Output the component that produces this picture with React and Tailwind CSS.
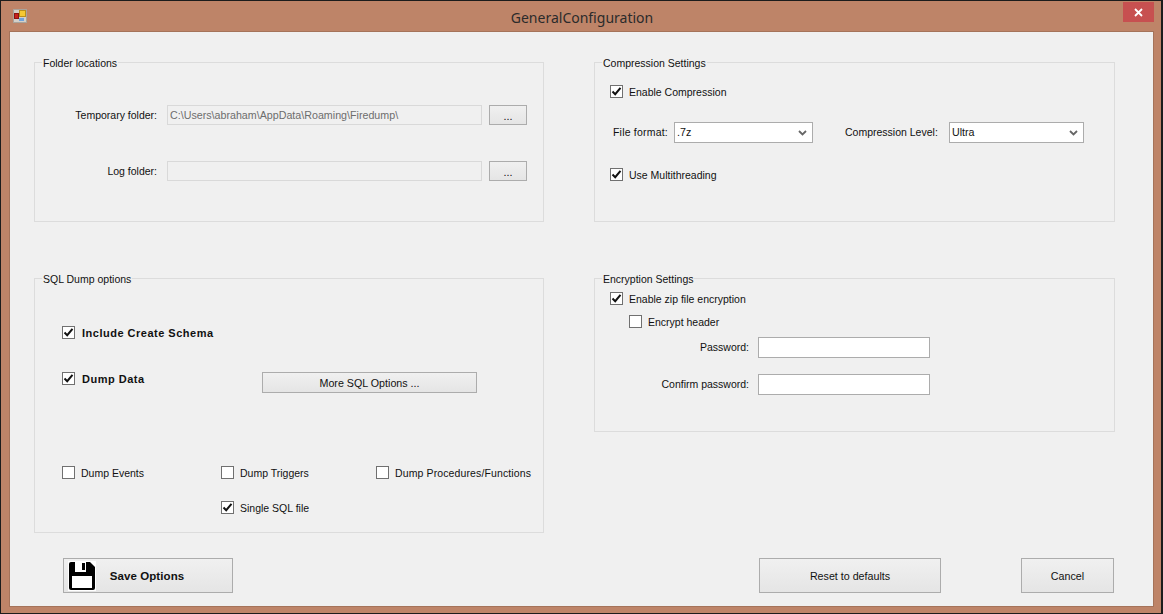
const font = "font-['Liberation_Sans',Arial,sans-serif]";

function Check({ label, checked, bold, className = '' }) {
  return (
    <label className={`flex items-center h-[13px] ${className}`}>
      <span className="w-[13px] h-[13px] shrink-0 border border-[#707070] bg-white flex items-center justify-center">
        {checked && (
          <svg width="11" height="11" viewBox="0 0 11 11">
            <path d="M1.5 5.5 L4.2 8.2 L9.5 1.8" fill="none" stroke="#111" strokeWidth="2" />
          </svg>
        )}
      </span>
      <span className={bold ? 'ml-[7px] pt-px text-[11px] font-bold tracking-[0.5px] whitespace-nowrap' : 'ml-[6px] pt-[2px] text-[10.5px] whitespace-nowrap'}>{label}</span>
    </label>
  );
}

function Group({ title, className = '', children }) {
  return (
    <div className={`relative border border-[#dcdcdc] ${className}`}>
      <span className="absolute left-[7px] top-[-7px] bg-[#f0f0f0] px-[1px] leading-[14px] text-[10.5px] h-[13px]">{title}</span>
      {children}
    </div>
  );
}

function Btn({ className = '', children }) {
  return (
    <button className={`border border-[#acacac] bg-gradient-to-b from-[#f0f0f0] to-[#e5e5e5] flex items-center justify-center pt-[2px] ${className}`}>
      {children}
    </button>
  );
}

function Dropdown({ value, className = '' }) {
  return (
    <div className={`h-[21px] border border-[#acacac] bg-white flex items-center justify-between pl-[2px] pr-[5px] ${className}`}>
      <span>{value}</span>
      <svg width="9" height="6" viewBox="0 0 9 6">
        <path d="M1 1 L4.5 4.5 L8 1" fill="none" stroke="#666" strokeWidth="1.8" />
      </svg>
    </div>
  );
}

function FolderRow({ label, value, className = '' }) {
  return (
    <div className={`flex items-center h-[20px] ${className}`}>
      <span className="w-[113px] pt-[2px] text-right text-[10.5px] whitespace-nowrap">{label}</span>
      <div className="ml-[10px] w-[315px] h-[20px] border border-[#d9d9d9] bg-[#f0f0f0] text-[#6d6d6d] pl-[2px] leading-[19px] whitespace-nowrap overflow-hidden">
        {value}
      </div>
      <Btn className="ml-[7px] w-[38px] h-[20px]">...</Btn>
    </div>
  );
}

function PassRow({ label, className = '' }) {
  return (
    <div className={`flex items-center h-[21px] ${className}`}>
      <span className="w-[139px] text-right text-[10.5px] whitespace-nowrap">{label}</span>
      <div className="ml-[9px] w-[172px] h-[21px] border border-[#acacac] bg-white" />
    </div>
  );
}

export default function App() {
  return (
    <div className={`${font} text-[10.7px] text-[#111] w-[1163px] h-[614px] overflow-hidden bg-[#1c1c1c] pt-px pl-px pr-[2px] pb-px`}>
      <div className="w-full h-full bg-[#be8468] flex flex-col">
        {/* title bar */}
        <div className="relative h-[30px] shrink-0 flex items-center justify-center">
          <svg className="absolute left-[12px] top-[8px]" width="15" height="15" viewBox="0 0 15 15">
            <rect x="0.5" y="0.5" width="13" height="13" fill="#d4cfc8" stroke="#a9a39b" />
            <rect x="1.5" y="4.5" width="4" height="5" fill="#c8201c" stroke="#8a1512" />
            <rect x="6.5" y="1.5" width="6" height="6" fill="#f5c932" stroke="#b98f1c" />
            <rect x="6" y="9" width="5" height="3" fill="#6fa3dc" />
          </svg>
          <span className="font-['Noto_Sans',sans-serif] text-[14px] text-[#2b2b2b] mt-[3px] ml-[2px]">GeneralConfiguration</span>
          <div className="absolute right-[7px] top-px w-[31px] h-[20px] bg-[#c75050] flex items-center justify-center">
            <svg width="9" height="9" viewBox="0 0 9 9">
              <path d="M1 1 L8 8 M8 1 L1 8" stroke="#fff" strokeWidth="1.8" />
            </svg>
          </div>
        </div>

        {/* client area */}
        <div className="ml-[8px] mr-[6px] w-[1145px] h-[576px] bg-[#f0f0f0] border border-[#a5735a] pl-[24px] pt-[30px]">
          <div className="flex gap-[50px] items-start">
            <Group title="Folder locations" className="w-[510px] h-[160px] pt-[42px] pl-[9px]">
              <FolderRow label="Temporary folder:" value="C:\Users\abraham\AppData\Roaming\Firedump\" />
              <FolderRow label="Log folder:" value="" className="mt-[36px]" />
            </Group>
            <Group title="Compression Settings" className="w-[521px] h-[160px] pt-[22px] pl-[15px]">
              <Check label="Enable Compression" checked />
              <div className="flex items-center mt-[24px] ml-[3px]">
                <span className="w-[61px] text-[10.5px] tracking-[0.2px]">File format:</span>
                <Dropdown value=".7z" className="w-[139px]" />
                <span className="ml-[32px] w-[104px] text-[10.5px]">Compression Level:</span>
                <Dropdown value="Ultra" className="w-[135px]" />
              </div>
              <Check label="Use Multithreading" checked className="mt-[25px]" />
            </Group>
          </div>

          <div className="flex gap-[50px] items-start mt-[56px]">
            <Group title="SQL Dump options" className="w-[510px] h-[255px] pt-[47px] pl-[27px]">
              <Check label="Include Create Schema" checked bold />
              <div className="flex items-start mt-[33px]">
                <Check label="Dump Data" checked bold className="w-[200px]" />
                <Btn className="w-[215px] h-[21px]">More SQL Options ...</Btn>
              </div>
              <div className="flex mt-[73px]">
                <Check label="Dump Events" className="w-[159px]" />
                <Check label="Dump Triggers" className="w-[155px]" />
                <Check label="Dump Procedures/Functions" className="tracking-[0.12px]" />
              </div>
              <Check label="Single SQL file" checked className="mt-[22px] ml-[159px]" />
            </Group>
            <Group title="Encryption Settings" className="w-[521px] h-[154px] pt-[13px] pl-[15px]">
              <Check label="Enable zip file encryption" checked />
              <Check label="Encrypt header" className="mt-[10px] ml-[19px]" />
              <PassRow label="Password:" className="mt-[9px]" />
              <PassRow label="Confirm password:" className="mt-[16px]" />
            </Group>
          </div>

          <div className="flex items-start mt-[25px] ml-[29px]">
            <Btn className="relative w-[170px] h-[35px] font-bold text-[11.5px]">
              <svg className="absolute left-[4px] top-[2px]" width="28" height="30" viewBox="0 0 28 30">
                <rect width="28" height="30" fill="#fff" />
                <path d="M1 3 a2 2 0 0 1 2-2 H22 L27 6 V27 a2 2 0 0 1-2 2 H3 a2 2 0 0 1-2-2 Z" fill="#000" />
                <rect x="7" y="1" width="11" height="10" fill="#fff" />
                <rect x="14" y="2" width="3" height="7" fill="#000" />
                <rect x="4" y="15" width="20" height="12" fill="#fff" />
              </svg>
              <span className="ml-[-2px] tracking-[0.1px]">Save Options</span>
            </Btn>
            <Btn className="ml-[526px] w-[182px] h-[35px]">Reset to defaults</Btn>
            <Btn className="ml-[80px] w-[93px] h-[35px]">Cancel</Btn>
          </div>
        </div>
      </div>
    </div>
  );
}
